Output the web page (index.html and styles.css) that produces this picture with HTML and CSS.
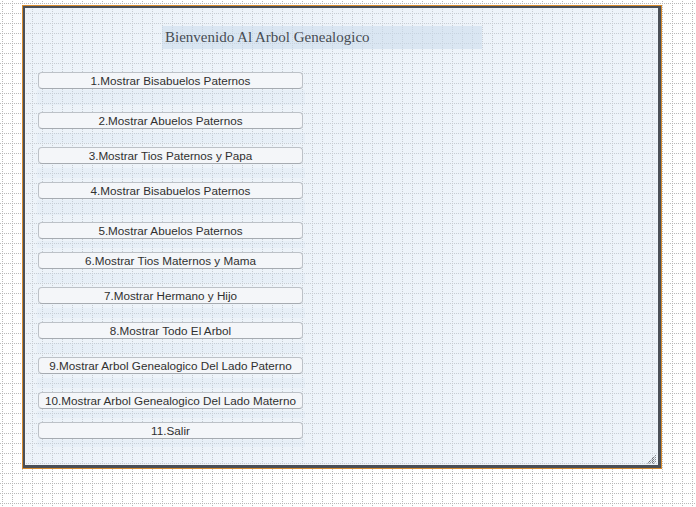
FILE: index.html
```html
<!DOCTYPE html>
<html lang="es">
<head>
<meta charset="utf-8">
<title>Arbol Genealogico</title>
<link rel="stylesheet" href="styles.css">
</head>
<body>
  <div class="window">
    <div class="frame">
      <div class="title">Bienvenido Al Arbol Genealogico</div>
      <div class="menu">
        <button class="btn">1.Mostrar Bisabuelos Paternos</button>
        <div class="gap gap-l"><span class="band"></span></div>
        <button class="btn">2.Mostrar Abuelos Paternos</button>
        <div class="gap gap-m"><span class="band"></span></div>
        <button class="btn">3.Mostrar Tios Paternos y Papa</button>
        <div class="gap gap-m"><span class="band"></span></div>
        <button class="btn">4.Mostrar Bisabuelos Paternos</button>
        <div class="gap gap-l"><span class="band"></span></div>
        <button class="btn">5.Mostrar Abuelos Paternos</button>
        <div class="gap gap-s"><span class="band"></span></div>
        <button class="btn">6.Mostrar Tios Maternos y Mama</button>
        <div class="gap gap-m"><span class="band"></span></div>
        <button class="btn">7.Mostrar Hermano y Hijo</button>
        <div class="gap gap-m"><span class="band"></span></div>
        <button class="btn">8.Mostrar Todo El Arbol</button>
        <div class="gap gap-m"><span class="band"></span></div>
        <button class="btn">9.Mostrar Arbol Genealogico Del Lado Paterno</button>
        <div class="gap gap-m"><span class="band"></span></div>
        <button class="btn">10.Mostrar Arbol Genealogico Del Lado Materno</button>
        <div class="gap gap-s"><span class="band"></span></div>
        <button class="btn">11.Salir</button>
        <div class="gap gap-end"><span class="band"></span></div>
      </div>
      <div class="grip">
        <svg width="9" height="9" viewBox="0 0 9 9" aria-hidden="true">
          <path d="M8.5 0.5 L0.5 8.5 M8.5 2.5 L2.5 8.5 M8.5 4.5 L4.5 8.5 M8.5 6.5 L6.5 8.5" stroke="#2e3238" stroke-width="1" stroke-dasharray="1 1" fill="none"/>
        </svg>
      </div>
    </div>
  </div>
</body>
</html>
```
FILE: styles.css
```css
html, body {
  margin: 0;
  padding: 0;
}

body {
  width: 696px;
  height: 507px;
  overflow: hidden;
  background-color: #ffffff;
  background-image:
    repeating-linear-gradient(to right, transparent 0 1px, #ffffff 1px 2px),
    repeating-linear-gradient(to bottom, #ffffff 0 1px, transparent 1px 2px),
    linear-gradient(to right, #b9b9b9 1px, transparent 1px),
    linear-gradient(to bottom, #b9b9b9 1px, transparent 1px);
  background-size: auto, auto, 10px 10px, 10px 10px;
  background-position: 0 0, 0 0, 2px 0, 0 3px;
  font-family: "Liberation Sans", Arial, sans-serif;
}

.window {
  margin: 5px 0 0 22px;
  width: 640px;
  height: 464px;
  box-sizing: border-box;
  border: 1px solid #d68a2e;
}

.frame {
  box-sizing: border-box;
  height: 100%;
  border-style: solid;
  border-color: #4a4f56;
  border-width: 2px 3px 3px 2px;
  background: rgba(214, 228, 242, 0.45);
  display: flex;
  flex-direction: column;
  padding: 18px 2px 1px 13px;
}

.title {
  align-self: flex-start;
  margin-left: 124px;
  width: 320px;
  height: 23px;
  box-sizing: border-box;
  padding-left: 3px;
  background: rgba(200, 218, 236, 0.5);
  font-family: "Liberation Serif", "Times New Roman", serif;
  font-size: 15px;
  line-height: 23px;
  color: #474c53;
}

.menu {
  display: flex;
  flex-direction: column;
  width: 265px;
  margin-top: 23px;
}

.btn {
  display: block;
  width: 265px;
  height: 17px;
  box-sizing: border-box;
  margin: 0;
  padding: 0;
  border: 1px solid #bcc1c7;
  border-bottom-color: #a6abb1;
  border-radius: 4px;
  background: #f4f6f9;
  font-family: "Liberation Sans", Arial, sans-serif;
  font-size: 11.7px;
  line-height: 14px;
  color: #303030;
  text-align: center;
  white-space: nowrap;
}

.gap {
  display: flex;
  flex-direction: column;
  margin: 0 -2px 0 -1px;
}

.band {
  display: block;
  flex: 1;
  background: rgba(200, 218, 236, 0.16);
}

.gap-l { height: 23px; padding: 1px 0 7px; box-sizing: border-box; }
.gap-m { height: 18px; padding: 4px 0 4px; box-sizing: border-box; }
.gap-s { height: 13px; padding: 2px 0 4px; box-sizing: border-box; }
.gap-end { height: 8px; padding: 1px 0 0; box-sizing: border-box; }

.grip {
  margin-top: auto;
  align-self: flex-end;
  width: 9px;
  height: 9px;
  line-height: 0;
}
```
